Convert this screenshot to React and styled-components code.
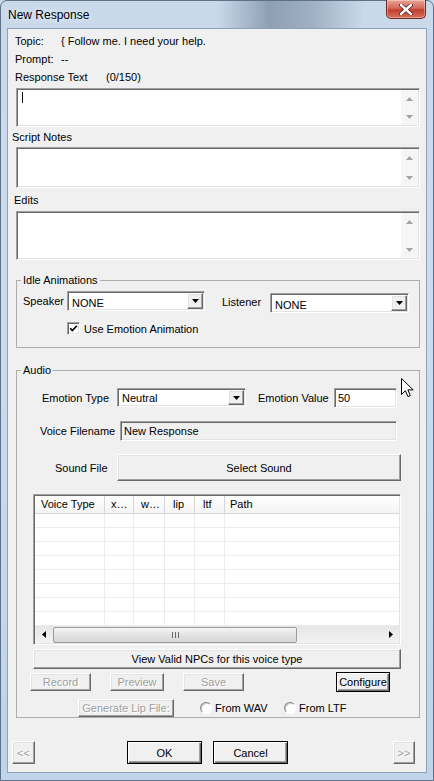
import React from "react";
import styled, { createGlobalStyle, css } from "styled-components";

const GlobalStyle = createGlobalStyle`
  html, body { margin: 0; padding: 0; }
  body {
    width: 434px; height: 781px; overflow: hidden;
    font-family: "Liberation Sans", Arial, sans-serif;
    font-size: 11px; color: #000;
    background: #c6d8ec;
  }
  * { box-sizing: border-box; }
`;

const sunken = css`
  border: 1px solid;
  border-color: #a0a0a0 #ffffff #ffffff #a0a0a0;
  box-shadow: inset 1px 1px 0 #696969, inset -1px -1px 0 #e3e3e3;
  padding: 1px;
`;

const raised = css`
  border: 1px solid;
  border-color: #ffffff #696969 #696969 #ffffff;
  box-shadow: inset -1px -1px 0 #a0a0a0, inset 1px 1px 0 #e3e3e3;
  background: #f0f0f0;
`;

const Window = styled.div`
  position: relative;
  width: 434px;
  height: 781px;
  display: flex;
  flex-direction: column;
  padding: 0 6px 7px 6px;
  border: 1px solid #5d7189;
  border-radius: 7px 7px 0 0;
  background:
    linear-gradient(
        to right,
        rgba(60, 80, 105, 0) 0%,
        rgba(60, 80, 105, 0) 50%,
        rgba(60, 80, 105, 0.42) 62%,
        rgba(60, 80, 105, 0.3) 72%,
        rgba(60, 80, 105, 0) 84%
      )
      top / 100% 28px no-repeat,
    linear-gradient(to bottom, #c9d9ea, #cbdcee 40%, #bfd3e9);
`;

const TitleBar = styled.div`
  height: 27px;
  flex-shrink: 0;
  display: flex;
  justify-content: space-between;
  align-items: flex-start;
  padding-left: 1px;
`;

const Title = styled.span`
  margin-top: 7px;
  font-size: 12px;
  line-height: 14px;
  text-shadow: 0 0 6px rgba(255, 255, 255, 0.95);
`;

const CloseButton = styled.div`
  width: 40px;
  height: 19px;
  margin-right: 1px;
  margin-top: -1px;
  border: 1px solid #6b2a22;
  border-top: none;
  border-radius: 0 0 5px 5px;
  background: linear-gradient(to bottom, #e8a493 0%, #d36a5c 45%, #c2402f 55%, #d4705a 100%);
  box-shadow: inset 0 0 0 1px rgba(255, 255, 255, 0.35);
  display: flex;
  align-items: center;
  justify-content: center;
`;

const Client = styled.div`
  flex: 1;
  display: flex;
  flex-direction: column;
  background: #f0f0f0;
  border: 1px solid #8da2b9;
  padding-top: 3px;
`;

const InfoRow = styled.div`
  display: flex;
  height: ${(p) => p.$h}px;
  line-height: ${(p) => p.$h}px;
  padding-left: 7px;
`;

const InfoLabel = styled.span`
  width: ${(p) => p.$w}px;
  flex-shrink: 0;
`;

const SectionLabel = styled.div`
  height: ${(p) => p.$h}px;
  padding: ${(p) => p.$pt || 0}px 0 0 ${(p) => p.$pl}px;
  line-height: 20px;
`;

const TextBox = styled.div`
  ${sunken};
  background: #fff;
  display: flex;
  margin: ${(p) => p.$mt || 0}px 0 0 8px;
  width: 404px;
  height: ${(p) => p.$h}px;
  flex-shrink: 0;
`;

const TextArea = styled.div`
  flex: 1;
  padding: 2px 0 0 4px;
`;

const Caret = styled.span`
  display: block;
  width: 1px;
  height: 11px;
  background: #000;
`;

const VScroll = styled.div`
  width: 17px;
  background: #f6f6f6;
  display: flex;
  flex-direction: column;
  justify-content: space-between;
`;

const ScrollButton = styled.div`
  width: 17px;
  height: 17px;
  display: flex;
  align-items: center;
  justify-content: center;
`;

const Group = styled.fieldset`
  margin: ${(p) => p.$mt}px 0 0 8px;
  padding: 0;
  width: 404px;
  min-width: 0;
  border: 1px solid #adadad;
  flex-shrink: 0;
`;

const Legend = styled.legend`
  margin-left: 4px;
  padding: 0 2px;
  line-height: 14px;
  height: 14px;
`;

const GroupBody = styled.div`
  display: flex;
  flex-direction: column;
  padding: ${(p) => p.$pt}px 0 ${(p) => p.$pb}px 0;
`;

const Row = styled.div`
  display: flex;
  align-items: ${(p) => p.$align || "center"};
  height: ${(p) => p.$h}px;
  margin-top: ${(p) => p.$mt || 0}px;
  padding-left: ${(p) => p.$pl || 0}px;
  flex-shrink: 0;
`;

const Label = styled.span`
  width: ${(p) => p.$w}px;
  margin-left: ${(p) => p.$ml || 0}px;
  line-height: ${(p) => p.$lh || 14}px;
  flex-shrink: 0;
  white-space: nowrap;
`;

const Combo = styled.div`
  ${sunken};
  background: #fff;
  display: flex;
  align-items: center;
  width: ${(p) => p.$w}px;
  height: ${(p) => p.$h}px;
  margin-top: ${(p) => p.$mt || 0}px;
  flex-shrink: 0;
`;

const ComboText = styled.span`
  flex: 1;
  padding: ${(p) => p.$shift || 0}px 0 0 3px;
`;

const DropButton = styled.span`
  ${raised};
  width: 16px;
  height: 100%;
  display: flex;
  align-items: center;
  justify-content: center;
`;

const Field = styled.div`
  ${sunken};
  background: ${(p) => (p.$disabled ? "#f0f0f0" : "#fff")};
  display: flex;
  align-items: center;
  padding-left: 3px;
  width: ${(p) => p.$w}px;
  height: 20px;
  flex-shrink: 0;
`;

const Button = styled.button`
  ${raised};
  font-family: inherit;
  font-size: 11px;
  padding: 0;
  width: ${(p) => p.$w}px;
  height: ${(p) => p.$h}px;
  margin-left: ${(p) => p.$ml || 0}px;
  flex-shrink: 0;
  display: flex;
  align-items: center;
  justify-content: center;
  color: #000;
  &:disabled {
    color: #a0a0a0;
    text-shadow: 1px 1px 0 #ffffff;
  }
  ${(p) =>
    p.$default &&
    css`
      border-color: #000;
      box-shadow: inset 1px 1px 0 #fff, inset -1px -1px 0 #696969, inset -2px -2px 0 #a0a0a0;
    `}
`;

const CheckBox = styled.span`
  width: 13px;
  height: 13px;
  ${sunken};
  padding: 0;
  background: #fff;
  display: flex;
  align-items: center;
  justify-content: center;
  flex-shrink: 0;
`;

const Radio = styled.span`
  width: 12px;
  height: 12px;
  border-radius: 50%;
  background: #fff;
  border: 1px solid;
  border-color: #8a8a8a #ffffff #ffffff #8a8a8a;
  box-shadow: inset 1px 1px 0 #c8c8c8;
  flex-shrink: 0;
`;

const RadioItem = styled.label`
  display: flex;
  align-items: center;
  gap: 3px;
  width: ${(p) => p.$w}px;
  margin-left: ${(p) => p.$ml || 0}px;
  flex-shrink: 0;
`;

const ListView = styled.div`
  ${sunken};
  background: #fff;
  margin: 13px 0 0 16px;
  width: 368px;
  height: 151px;
  display: flex;
  flex-direction: column;
  flex-shrink: 0;
`;

const ListHeader = styled.div`
  display: flex;
  height: 18px;
  border-bottom: 1px solid #d5d5d5;
  background: linear-gradient(to bottom, #ffffff, #f4f4f4);
`;

const HeaderCell = styled.div`
  width: ${(p) => (p.$w ? `${p.$w}px` : "auto")};
  flex: ${(p) => (p.$w ? "0 0 auto" : "1")};
  padding-left: ${(p) => p.$pl || 6}px;
  line-height: 17px;
  border-right: ${(p) => (p.$w ? "1px solid #d5d5d5" : "none")};
  white-space: nowrap;
  overflow: hidden;
`;

const ListBody = styled.div`
  flex: 1;
  overflow: hidden;
`;

const ListRow = styled.div`
  display: flex;
  height: 14px;
  border-bottom: 1px solid #ececec;
`;

const ListCell = styled.div`
  width: ${(p) => (p.$w ? `${p.$w}px` : "auto")};
  flex: ${(p) => (p.$w ? "0 0 auto" : "1")};
  border-right: ${(p) => (p.$w ? "1px solid #ececec" : "none")};
`;

const HScroll = styled.div`
  height: 17px;
  display: flex;
  align-items: center;
  background: linear-gradient(to bottom, #e6e6e6, #f2f2f2);
`;

const HArrow = styled.div`
  width: 17px;
  height: 17px;
  display: flex;
  align-items: center;
  justify-content: center;
  flex-shrink: 0;
`;

const Thumb = styled.div`
  width: 244px;
  height: 16px;
  margin-left: 1px;
  border: 1px solid #9c9c9c;
  border-radius: 2px;
  background: linear-gradient(to bottom, #f5f5f5, #e3e3e3 50%, #d6d6d6);
  display: flex;
  align-items: center;
  justify-content: center;
`;

const Track = styled.div`
  flex: 1;
`;

const Cursor = styled.svg`
  position: absolute;
  left: 400px;
  top: 377px;
`;

const cols = [70, 29, 31, 30, 30, null];

const UpArrow = ({ color = "#a3a3a3" }) => (
  <svg width="7" height="4" viewBox="0 0 7 4">
    <polygon points="0,4 3.5,0 7,4" fill={color} />
  </svg>
);
const DownArrow = ({ color = "#a3a3a3" }) => (
  <svg width="7" height="4" viewBox="0 0 7 4">
    <polygon points="0,0 7,0 3.5,4" fill={color} />
  </svg>
);
const LeftArrow = () => (
  <svg width="4" height="7" viewBox="0 0 4 7">
    <polygon points="4,0 4,7 0,3.5" fill="#000" />
  </svg>
);
const RightArrow = () => (
  <svg width="4" height="7" viewBox="0 0 4 7">
    <polygon points="0,0 4,3.5 0,7" fill="#000" />
  </svg>
);

const ScrollText = ({ h, mt, caret }) => (
  <TextBox $h={h} $mt={mt}>
    <TextArea>{caret && <Caret />}</TextArea>
    <VScroll>
      <ScrollButton>
        <UpArrow />
      </ScrollButton>
      <ScrollButton>
        <DownArrow />
      </ScrollButton>
    </VScroll>
  </TextBox>
);

const Select = ({ w, h, mt, value, shift }) => (
  <Combo $w={w} $h={h} $mt={mt}>
    <ComboText $shift={shift}>{value}</ComboText>
    <DropButton>
      <DownArrow color="#000" />
    </DropButton>
  </Combo>
);

export default function App() {
  return (
    <>
      <GlobalStyle />
      <Window>
        <TitleBar>
          <Title>New Response</Title>
          <CloseButton>
            <svg width="14" height="11" viewBox="0 0 14 11">
              <path d="M2 1 L12 10 M12 1 L2 10" stroke="#5a1a12" strokeWidth="4" strokeLinecap="round" />
              <path d="M2 1 L12 10 M12 1 L2 10" stroke="#ffffff" strokeWidth="2.4" strokeLinecap="round" />
            </svg>
          </CloseButton>
        </TitleBar>
        <Client>
          <InfoRow $h={19}>
            <InfoLabel $w={46}>Topic:</InfoLabel>
            <span>{"{ Follow me. I need your help."}</span>
          </InfoRow>
          <InfoRow $h={17}>
            <InfoLabel $w={46}>Prompt:</InfoLabel>
            <span>--</span>
          </InfoRow>
          <InfoRow $h={18}>
            <InfoLabel $w={91}>Response Text</InfoLabel>
            <span>(0/150)</span>
          </InfoRow>
          <ScrollText h={39} mt={2} caret />
          <SectionLabel $h={20} $pl={4}>
            Script Notes
          </SectionLabel>
          <ScrollText h={41} />
          <SectionLabel $h={23} $pl={6} $pt={2}>
            Edits
          </SectionLabel>
          <ScrollText h={49} />

          <Group $mt={13}>
            <Legend>Idle Animations</Legend>
            <GroupBody $pt={4} $pb={12}>
              <Row $h={22} $pl={6} $align="flex-start">
                <Label $w={44} $lh={20}>
                  Speaker
                </Label>
                <Select w={138} h={20} value="NONE" shift={3} />
                <Label $w={48} $ml={17} $lh={22}>
                  Listener
                </Label>
                <Select w={139} h={20} mt={2} value="NONE" shift={3} />
              </Row>
              <Row $h={13} $mt={9} $pl={50}>
                <CheckBox>
                  <svg width="9" height="9" viewBox="0 0 9 9">
                    <path d="M1.2 4.2 L3.4 6.6 L7.8 1.8" stroke="#000" strokeWidth="1.7" fill="none" />
                  </svg>
                </CheckBox>
                <Label $ml={4}>Use Emotion Animation</Label>
              </Row>
            </GroupBody>
          </Group>

          <Group $mt={15}>
            <Legend>Audio</Legend>
            <GroupBody $pt={10} $pb={0}>
              <Row $h={21} $pl={25}>
                <Label $w={75}>Emotion Type</Label>
                <Select w={129} h={19} value="Neutral" />
                <Label $w={76} $ml={12}>
                  Emotion Value
                </Label>
                <Field $w={63}>50</Field>
              </Row>
              <Row $h={20} $mt={13} $pl={23}>
                <Label $w={80}>Voice Filename</Label>
                <Field $w={277} $disabled>
                  New Response
                </Field>
              </Row>
              <Row $h={27} $mt={13} $pl={38}>
                <Label $w={62}>Sound File</Label>
                <Button $w={284} $h={27}>
                  Select Sound
                </Button>
              </Row>
              <ListView>
                <ListHeader>
                  <HeaderCell $w={70}>Voice Type</HeaderCell>
                  <HeaderCell $w={29}>x…</HeaderCell>
                  <HeaderCell $w={31} $pl={7}>
                    w…
                  </HeaderCell>
                  <HeaderCell $w={30} $pl={8}>
                    lip
                  </HeaderCell>
                  <HeaderCell $w={30} $pl={8}>
                    ltf
                  </HeaderCell>
                  <HeaderCell $pl={5}>Path</HeaderCell>
                </ListHeader>
                <ListBody>
                  {Array.from({ length: 8 }).map((_, r) => (
                    <ListRow key={r}>
                      {cols.map((w, c) => (
                        <ListCell key={c} $w={w} />
                      ))}
                    </ListRow>
                  ))}
                </ListBody>
                <HScroll>
                  <HArrow>
                    <LeftArrow />
                  </HArrow>
                  <Thumb>
                    <svg width="7" height="6" viewBox="0 0 7 6">
                      <path d="M0.5 0 V6 M3.5 0 V6 M6.5 0 V6" stroke="#6b6b6b" strokeWidth="1" />
                    </svg>
                  </Thumb>
                  <Track />
                  <HArrow>
                    <RightArrow />
                  </HArrow>
                </HScroll>
              </ListView>
              <Row $h={20} $mt={4} $pl={16}>
                <Button $w={368} $h={20}>
                  View Valid NPCs for this voice type
                </Button>
              </Row>
              <Row $h={20} $mt={3} $pl={13}>
                <Button $w={61} $h={18} disabled>
                  Record
                </Button>
                <Button $w={54} $h={18} $ml={19} disabled>
                  Preview
                </Button>
                <Button $w={61} $h={18} $ml={19} disabled>
                  Save
                </Button>
                <Button $w={54} $h={20} $ml={92} $default>
                  Configure
                </Button>
              </Row>
              <Row $h={18} $mt={7} $pl={61}>
                <Button $w={96} $h={18} disabled>
                  Generate Lip File:
                </Button>
                <RadioItem $w={84} $ml={26}>
                  <Radio />
                  From WAV
                </RadioItem>
                <RadioItem $w={80}>
                  <Radio />
                  From LTF
                </RadioItem>
              </Row>
            </GroupBody>
          </Group>

          <Row $h={23} $mt={23} $pl={4}>
            <Button $w={23} $h={23} disabled>
              &lt;&lt;
            </Button>
            <Button $w={75} $h={23} $ml={92} $default>
              OK
            </Button>
            <Button $w={75} $h={23} $ml={11} $default>
              Cancel
            </Button>
            <Button $w={22} $h={23} $ml={105} disabled>
              &gt;&gt;
            </Button>
          </Row>
        </Client>
        <Cursor width="13" height="20" viewBox="0 0 13 20">
          <path
            d="M0.5 0.5 V16.5 L4.4 12.7 L6.9 18.6 L9.3 17.6 L6.9 11.9 H12.2 Z"
            fill="#fff"
            stroke="#000"
            strokeWidth="1"
            strokeLinejoin="miter"
          />
        </Cursor>
      </Window>
    </>
  );
}
